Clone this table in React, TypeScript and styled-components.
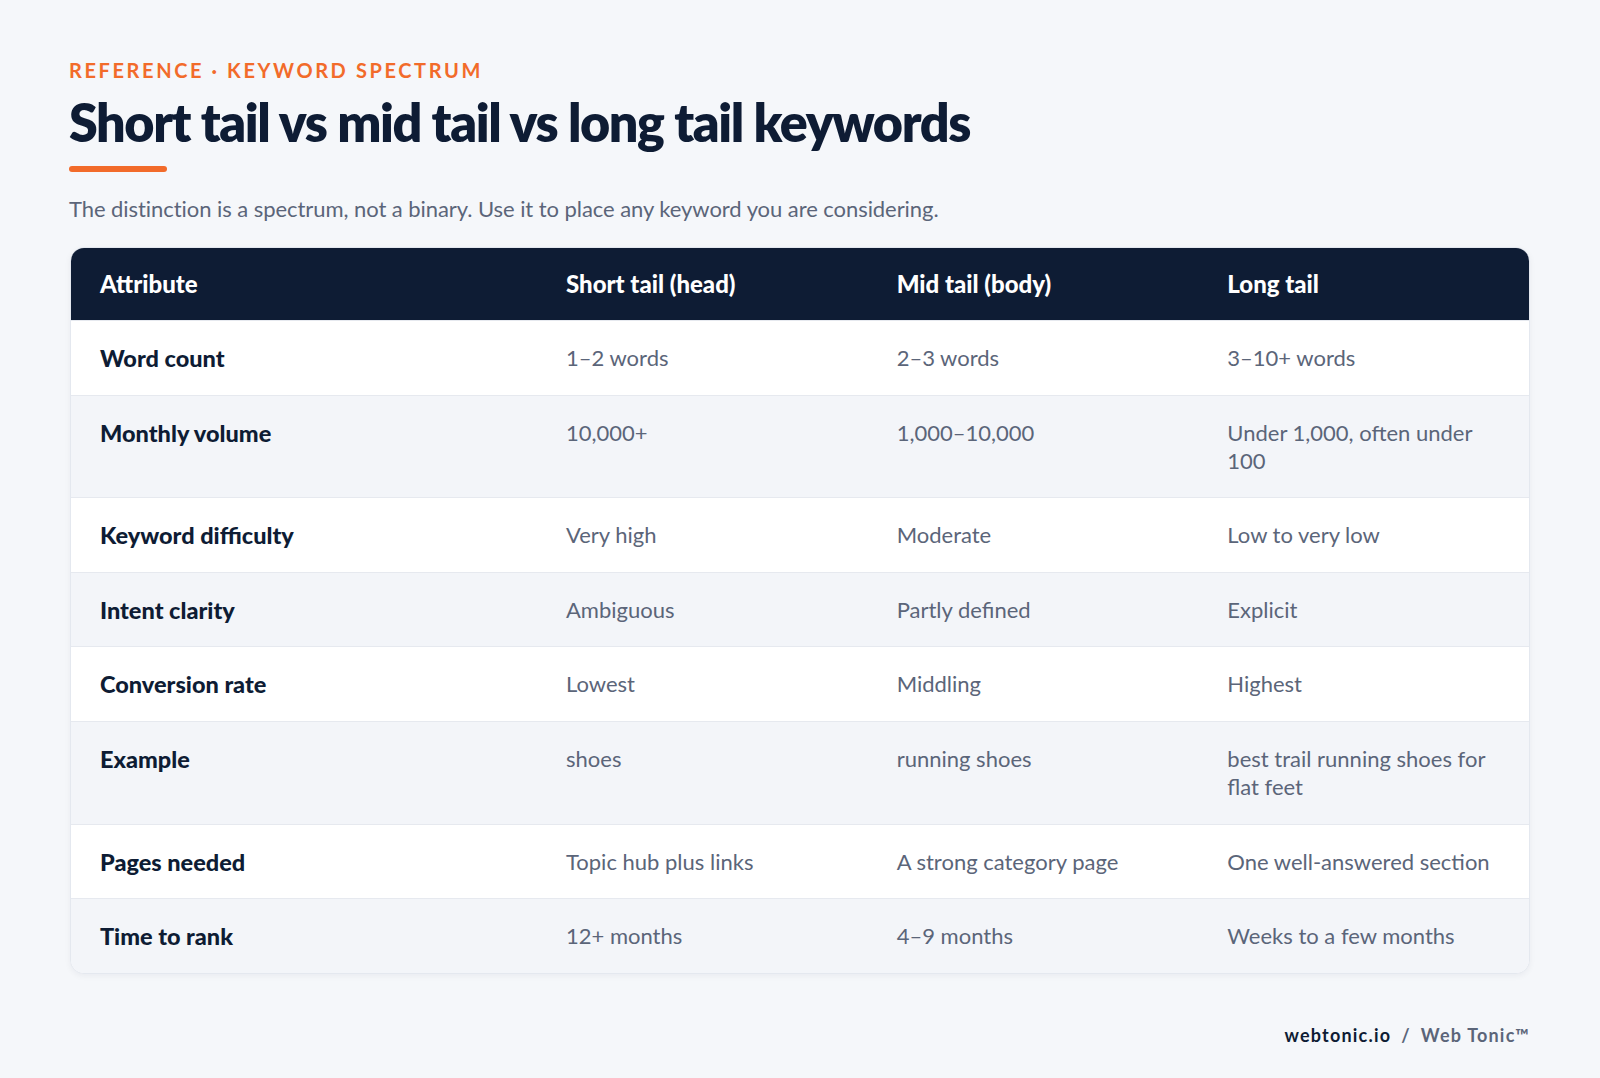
import styled, { createGlobalStyle } from "styled-components";

const NAVY = "#0e1c34";
const ORANGE = "#f26b2a";
const SLATE = "#5b6579";

const GlobalStyle = createGlobalStyle`
  html, body {
    margin: 0;
    padding: 0;
    background: #f5f7fa;
    font-family: Lato, "Open Sans", "Liberation Sans", sans-serif;
  }
`;

const rows: [string, string, string, string][] = [
  ["Word count", "1–2 words", "2–3 words", "3–10+ words"],
  ["Monthly volume", "10,000+", "1,000–10,000", "Under 1,000, often under 100"],
  ["Keyword difficulty", "Very high", "Moderate", "Low to very low"],
  ["Intent clarity", "Ambiguous", "Partly defined", "Explicit"],
  ["Conversion rate", "Lowest", "Middling", "Highest"],
  ["Example", "shoes", "running shoes", "best trail running shoes for flat feet"],
  ["Pages needed", "Topic hub plus links", "A strong category page", "One well-answered section"],
  ["Time to rank", "12+ months", "4–9 months", "Weeks to a few months"],
];

const Page = styled.main`
  width: 1600px;
  height: 1078px;
  box-sizing: border-box;
  padding: 58px 70px 0 69px;
  display: flex;
  flex-direction: column;
`;

const Eyebrow = styled.div`
  color: ${ORANGE};
  font-size: 20px;
  font-weight: 700;
  letter-spacing: 2.6px;
  line-height: 24px;
  text-transform: uppercase;
`;

const Title = styled.h1`
  margin: 10px 0 0;
  color: ${NAVY};
  font-size: 52px;
  font-weight: 800;
  letter-spacing: -1.4px;
  line-height: 60px;
`;

const Accent = styled.div`
  margin-top: 14px;
  width: 98px;
  height: 6px;
  border-radius: 3px;
  background: ${ORANGE};
`;

const Lede = styled.p`
  margin: 22px 0 0;
  color: ${SLATE};
  font-size: 22px;
  line-height: 30px;
  letter-spacing: -0.06px;
`;

const Table = styled.div`
  margin-top: 23px;
  margin-left: 1px;
  background: #fff;
  border: 1px solid #e4e8ef;
  border-radius: 14px;
  overflow: hidden;
  box-shadow: 0 2px 6px rgba(15, 29, 54, 0.05);
`;

const Row = styled.div<{ $tone: "head" | "odd" | "even" }>`
  display: grid;
  grid-template-columns: 466px 1fr 1fr 1fr;
  background: ${({ $tone }) =>
    $tone === "head" ? NAVY : $tone === "even" ? "#f3f5f9" : "#ffffff"};
  border-top: ${({ $tone }) => ($tone === "head" ? "none" : "1px solid #e6e9ef")};
`;

const HeadCell = styled.div`
  padding: 22px 30px 22px 29px;
  color: #ffffff;
  font-size: 24px;
  font-weight: 900;
  line-height: 28px;
`;

const Cell = styled.div<{ $label?: boolean }>`
  padding: 23px 30px 22.6px 29px;
  color: ${({ $label }) => ($label ? NAVY : SLATE)};
  font-size: ${({ $label }) => ($label ? "23.5px" : "22px")};
  font-weight: ${({ $label }) => ($label ? 900 : 400)};
  line-height: 28px;
`;

const Footer = styled.footer`
  margin-top: auto;
  margin-bottom: 32px;
  align-self: flex-end;
  font-size: 18px;
  font-weight: 700;
  letter-spacing: 1.2px;
  color: ${SLATE};
`;

const Brand = styled.span`
  color: ${NAVY};
`;

const Sep = styled.span`
  margin: 0 10px;
`;

export default function App() {
  return (
    <>
      <GlobalStyle />
      <Page>
        <Eyebrow>Reference · Keyword spectrum</Eyebrow>
        <Title>Short tail vs mid tail vs long tail keywords</Title>
        <Accent />
        <Lede>
          The distinction is a spectrum, not a binary. Use it to place any keyword you are considering.
        </Lede>
        <Table>
          <Row $tone="head">
            <HeadCell>Attribute</HeadCell>
            <HeadCell>Short tail (head)</HeadCell>
            <HeadCell>Mid tail (body)</HeadCell>
            <HeadCell>Long tail</HeadCell>
          </Row>
          {rows.map((r, i) => (
            <Row key={r[0]} $tone={i % 2 === 0 ? "odd" : "even"}>
              <Cell $label>{r[0]}</Cell>
              <Cell>{r[1]}</Cell>
              <Cell>{r[2]}</Cell>
              <Cell>{r[3]}</Cell>
            </Row>
          ))}
        </Table>
        <Footer>
          <Brand>webtonic.io</Brand>
          <Sep>/</Sep>
          Web Tonic™
        </Footer>
      </Page>
    </>
  );
}
